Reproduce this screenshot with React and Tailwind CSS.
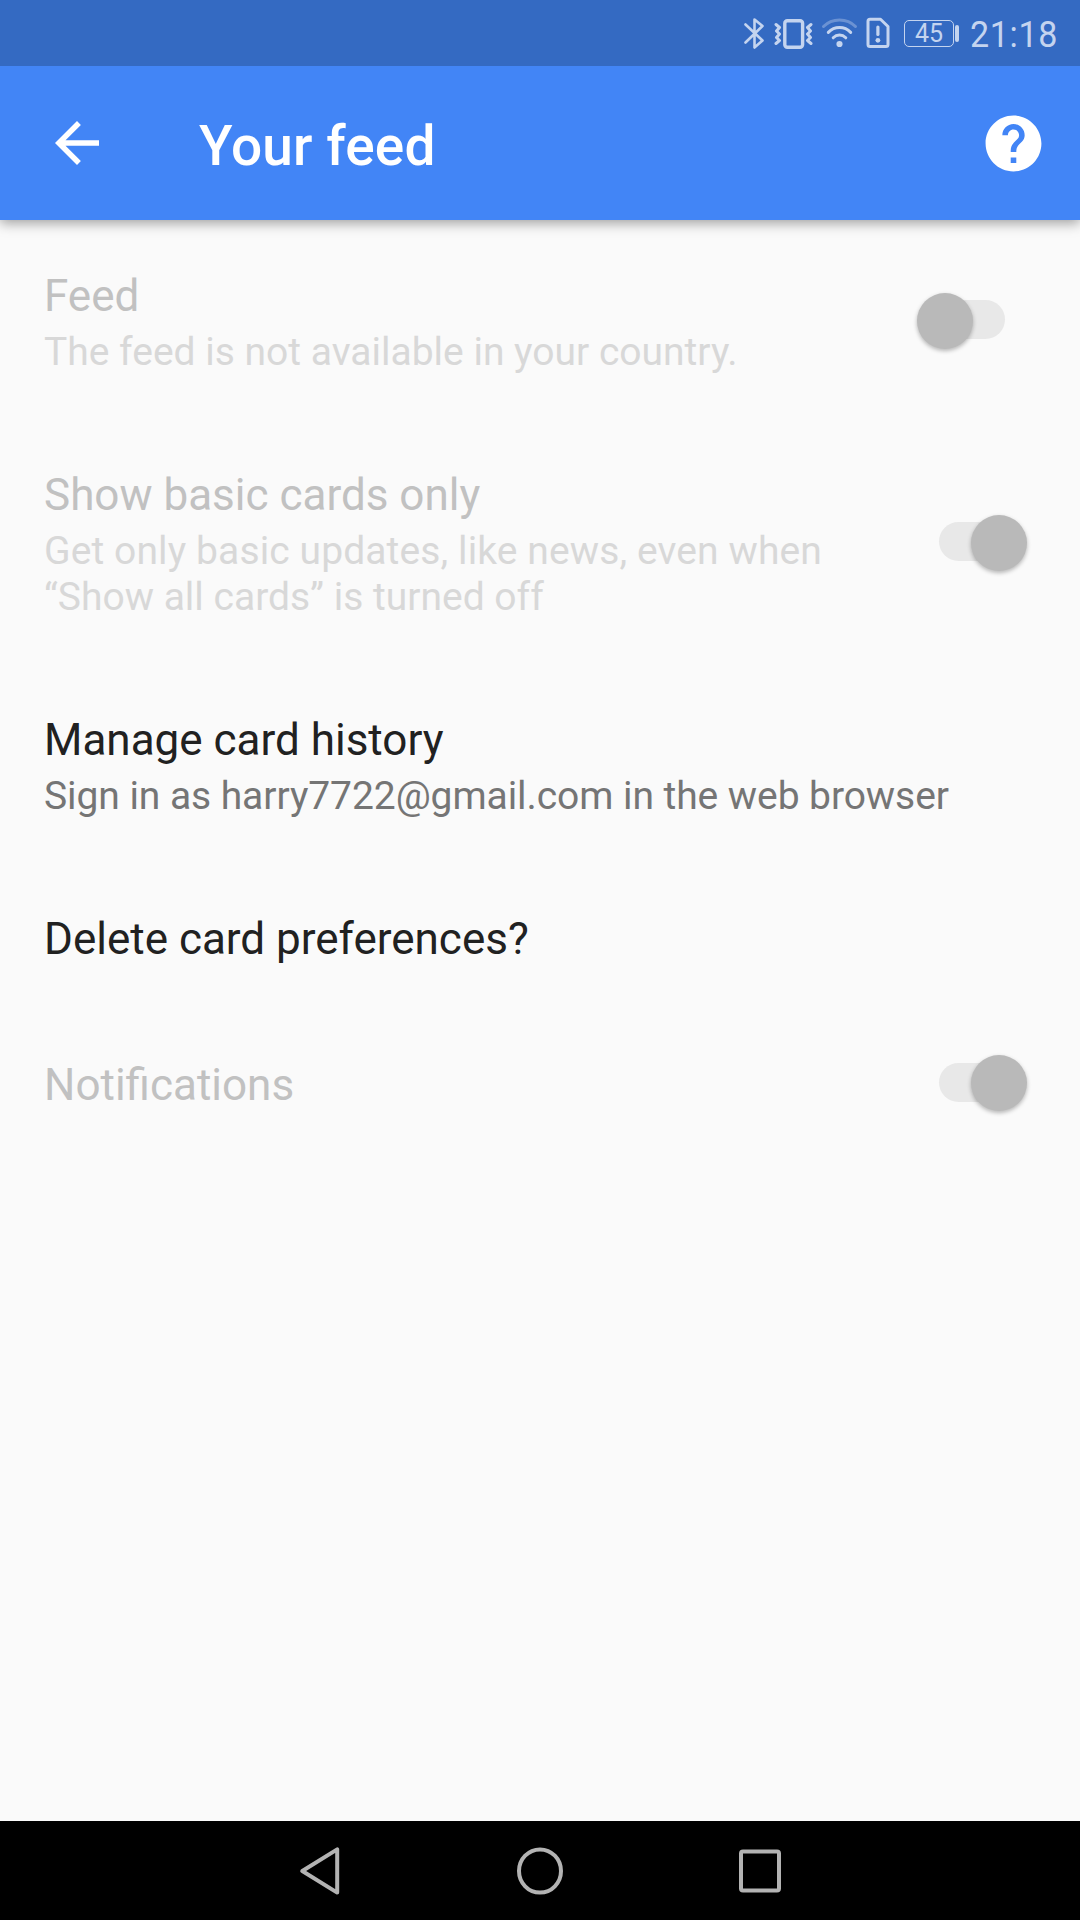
import React from 'react';

const settings = [
  { id: 'feed', title: 'Feed', summary: [{ text: 'The feed is not available in your country.' }], disabled: true, toggle: 'off' },
  {
    id: 'basic',
    title: 'Show basic cards only',
    summary: [
      { text: 'Get only basic updates, like news, even when', tracking: 'tracking-[0.11px]' },
      { text: '“Show all cards” is turned off' }
    ],
    disabled: true,
    toggle: 'on'
  },
  {
    id: 'history',
    title: 'Manage card history',
    summary: [{ text: 'Sign in as harry7722@gmail.com in the web browser', tracking: 'tracking-[-0.07px]' }]
  },
  { id: 'delete', title: 'Delete card preferences?', summary: [] },
  { id: 'notifications', title: 'Notifications', summary: [], disabled: true, toggle: 'on' }
];

const StatusBar = () => (
  <div className="relative z-10 flex h-[66px] items-center justify-end bg-[#346ac2] pr-[21px] text-[#c4d4ef]">
    {/* Bluetooth */}
    <svg className="mr-[9px] h-8 w-[22px]" viewBox="0 0 22 32" fill="none" stroke="currentColor" strokeWidth="2.6" strokeLinejoin="round" strokeLinecap="round">
      <path d="M2.5 7.5 L19.5 23.5 L11.5 30.5 V2.5 L19.5 9 L2.5 25.5" />
    </svg>
    {/* Vibrate */}
    <svg className="mr-[8px] h-8 w-[39px]" viewBox="0 0 39 32" fill="none" stroke="currentColor" strokeLinejoin="round" strokeLinecap="round">
      <rect x="10.8" y="3.7" width="17.8" height="26.5" rx="2.5" strokeWidth="3.4" />
      <path d="M2 7.5 L5.5 10.5 L2.5 14 L5.5 17 L2.5 20.5 L5.5 23.5 L2 26.5" strokeWidth="3" />
      <path d="M37 7.5 L33.5 10.5 L36.5 14 L33.5 17 L36.5 20.5 L33.5 23.5 L37 26.5" strokeWidth="3" />
    </svg>
    {/* Wi-Fi */}
    <svg className="mr-[8px] h-8 w-[37px]" viewBox="0 0 37 32" fill="none" stroke="currentColor" strokeWidth="3" strokeLinecap="round">
      <path d="M2.5 9.5 C11 0.8 26 0.8 34.5 9.5" opacity="0.38" />
      <path d="M7.3 15.4 C13.5 9 23.5 9 29.7 15.4" />
      <path d="M12.2 20.8 C15.8 17.2 21.2 17.2 24.8 20.8" />
      <circle cx="18.5" cy="27" r="3.1" fill="currentColor" stroke="none" />
    </svg>
    {/* SIM alert */}
    <svg className="mr-[14px] h-8 w-6" viewBox="0 0 24 32" fill="none" stroke="currentColor" strokeWidth="3" strokeLinejoin="round">
      <path d="M4 2.2 H14.5 L22 9.5 V27.5 Q22 29.5 20 29.5 H4 Q2 29.5 2 27.5 V4.2 Q2 2.2 4 2.2 Z" />
      <path d="M11.9 10 V17.5" strokeWidth="3.2" strokeLinecap="round" />
      <circle cx="11.9" cy="23.3" r="2.4" fill="currentColor" stroke="none" />
    </svg>
    {/* Battery */}
    <div className="flex items-center">
      <div className="flex h-[27px] w-[50px] items-center justify-center rounded-[5px] border-[1.5px] border-[#c4d4ef]">
        <span className="text-[25px] leading-none">45</span>
      </div>
      <div className="ml-px h-[17px] w-[4px] rounded-[2px] bg-[#c4d4ef]" />
    </div>
    <span className="mt-[3px] ml-[11px] w-[89px] origin-left scale-x-[0.92] text-[37px] leading-[44px] tracking-[0.7px]">21:18</span>
  </div>
);

const AppBar = () => (
  <header className="relative flex h-[154px] items-center bg-[#4285f6] pr-[33px] pl-[44px] text-white shadow-[0_3px_12px_rgba(0,0,0,0.38)]">
    <svg className="h-[66px] w-[66px]" viewBox="0 0 24 24" fill="currentColor">
      <path d="M20 11H7.83l5.59-5.59L12 4l-8 8 8 8 1.41-1.41L7.83 13H20v-2z" />
    </svg>
    <h1 className="mt-[5px] ml-[89px] flex-1 text-[55px] leading-[64px] font-medium tracking-[0.12px]">Your feed</h1>
    <svg className="h-[67px] w-[67px]" viewBox="0 0 24 24" fill="currentColor">
      <path d="M12 2C6.48 2 2 6.48 2 12s4.48 10 10 10 10-4.48 10-10S17.52 2 12 2zm1 17h-2v-2h2v2zm2.07-7.75l-.9.92C13.45 12.9 13 13.5 13 15h-2v-.5c0-1.1.45-2.1 1.17-2.83l1.24-1.26c.37-.36.59-.86.59-1.41 0-1.1-.9-2-2-2s-2 .9-2 2H8c0-2.21 1.79-4 4-4s4 1.79 4 4c0 .88-.36 1.68-.93 2.25z" />
    </svg>
  </header>
);

const Knob = () => (
  <div className="z-10 h-[56px] w-[56px] shrink-0 rounded-full bg-[#b9b9b9] shadow-[0_2px_4px_rgba(0,0,0,0.28)]" />
);

const Toggle = ({ on }) => (
  <div className={`-mt-[3px] flex h-[56px] w-[88px] items-center ${on ? 'mr-[53px] justify-end' : 'mr-[75px]'}`}>
    {!on && <Knob />}
    <div className={`mb-[2px] h-[39px] w-[60px] shrink-0 bg-[#e8e8e8] ${on ? '-mr-[28px] rounded-l-full' : '-ml-[28px] rounded-r-full'}`} />
    {on && <Knob />}
  </div>
);

const SettingRow = ({ item }) => (
  <div className="flex items-center justify-between py-[46.5px] pl-[44px]">
    <div>
      <div className={`pt-[2px] text-[44px] leading-[51px] ${item.disabled ? 'text-[#c1c1c1]' : 'text-[#212121]'}`}>{item.title}</div>
      {item.summary.length > 0 && (
        <div className={`mt-[7px] text-[39px] leading-[46px] whitespace-nowrap ${item.disabled ? 'text-[#d8d8d8]' : 'text-[#757575]'}`}>
          {item.summary.map((line) => (
            <div key={line.text} className={line.tracking}>{line.text}</div>
          ))}
        </div>
      )}
    </div>
    {item.toggle && <Toggle on={item.toggle === 'on'} />}
  </div>
);

const NavBar = () => (
  <nav className="flex h-[99px] items-center justify-center gap-[172px] bg-black text-[#b3b3b3]">
    <svg className="h-12 w-12" viewBox="0 0 48 48" fill="none" stroke="currentColor" strokeWidth="4" strokeLinejoin="round">
      <path d="M6.3 24 L41.2 2.4 V45.6 Z" />
    </svg>
    <svg className="h-12 w-12" viewBox="0 0 48 48" fill="none" stroke="currentColor" strokeWidth="4">
      <ellipse cx="24" cy="24" rx="21" ry="21.6" />
    </svg>
    <svg className="h-12 w-12" viewBox="0 0 48 48" fill="none" stroke="currentColor" strokeWidth="4">
      <rect x="5" y="4.5" width="38" height="39" rx="2" />
    </svg>
  </nav>
);

const App = () => (
  <div className="flex h-[1920px] w-[1080px] flex-col overflow-hidden bg-[#fafafa] font-['Roboto',sans-serif]">
    <StatusBar />
    <AppBar />
    <main className="flex-1 pt-[2.5px]">
      {settings.map((item) => (
        <SettingRow key={item.id} item={item} />
      ))}
    </main>
    <NavBar />
  </div>
);

export default App;
